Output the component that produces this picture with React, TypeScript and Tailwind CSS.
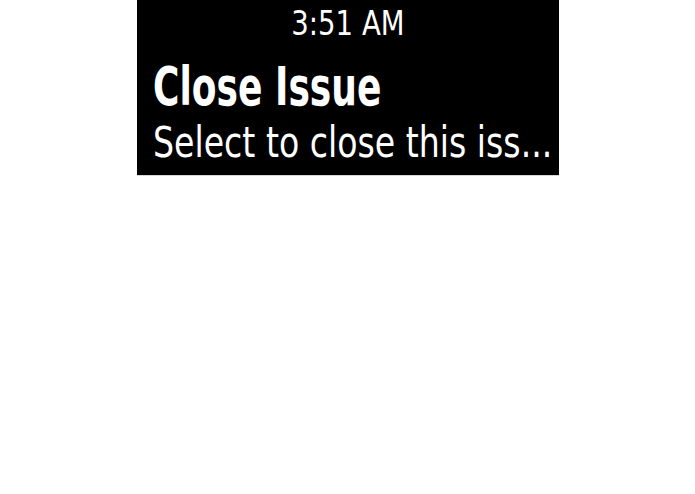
export default function App() {
  const font = { fontFamily: '"DejaVu Sans", "Liberation Sans", sans-serif' };
  return (
    <div className="w-[695px] h-[494px] bg-white" style={font}>
      <div className="mx-auto w-[422px]">
        <div className="h-[175px] bg-black text-white overflow-hidden">
          <div className="pt-[6px] h-[40px] text-center text-[34px] leading-none">
            <span className="inline-block origin-center scale-x-[0.81] whitespace-nowrap">3:51 AM</span>
          </div>
          <div className="mt-[20px] pl-[16px] h-[53px] text-[53px] leading-none font-bold whitespace-nowrap">
            <span className="inline-block origin-left scale-x-[0.68]">Close Issue</span>
          </div>
          <div className="mt-[9px] pl-[16px] h-[42px] text-[42px] leading-none whitespace-nowrap">
            <span className="inline-block origin-left scale-x-[0.79]">Select to close this iss...</span>
          </div>
        </div>
        <div className="h-px bg-[#d8d8d8]" />
      </div>
    </div>
  );
}
